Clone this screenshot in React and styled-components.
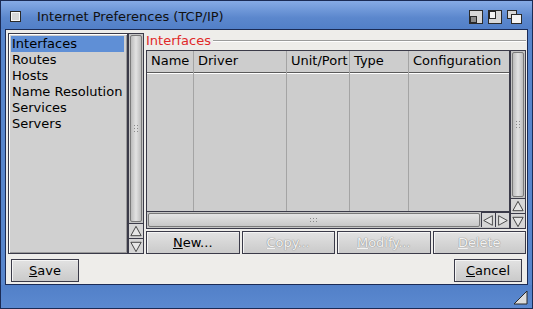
import React from 'react'
import styled, { createGlobalStyle } from 'styled-components'

const GlobalStyle = createGlobalStyle`
  * { box-sizing: border-box; }
  html, body { margin: 0; padding: 0; background: #5886cc; }
  body { font-family: "DejaVu Sans", "Liberation Sans", sans-serif; font-size: 13px; }
`

const items = ['Interfaces', 'Routes', 'Hosts', 'Name Resolution', 'Services', 'Servers']

const columns = [
    { label: 'Name', width: 47 },
    { label: 'Driver', width: 93 },
    { label: 'Unit/Port', width: 63 },
    { label: 'Type', width: 59 },
    { label: 'Configuration', width: 0 },
]

function Arrow({ dir }) {
    const pts = {
        up: '2,12 7.5,2 13,12',
        down: '2,3 7.5,13 13,3',
        left: '12,2 2,7.5 12,13',
        right: '3,2 13,7.5 3,13',
    }
    return (
        <svg width="15" height="15" viewBox="0 0 15 15">
            <polygon points={pts[dir]} fill="#e6e6e6" stroke="#3a3a3a" strokeWidth="1" />
        </svg>
    )
}

function Grip({ horizontal }) {
    const dots = []
    for (let i = 0; i < 3; i++) {
        for (let j = 0; j < 2; j++) {
            dots.push(horizontal
                ? <rect key={i + '-' + j} x={i * 3} y={j * 3} width="1" height="1" fill="#8a8a8a" />
                : <rect key={i + '-' + j} x={j * 3} y={i * 3} width="1" height="1" fill="#8a8a8a" />)
        }
    }
    return horizontal
        ? <svg width="8" height="5">{dots}</svg>
        : <svg width="5" height="8">{dots}</svg>
}

function Under({ text }) {
    return (
        <>
            <u>{text[0]}</u>{text.slice(1)}
        </>
    )
}

function App() {
    return (
        <Window>
            <GlobalStyle />
            <TitleBar>
                <CloseGadget />
                <Title>Internet Preferences (TCP/IP)</Title>
                <Gadgets>
                    <svg width="14" height="14" viewBox="0 0 14 14">
                        <rect x="0.5" y="0.5" width="13" height="13" fill="#d8d8d8" stroke="#2a2a2a" />
                        <rect x="1.5" y="6.5" width="6" height="6" fill="#8c8c8c" stroke="#2a2a2a" />
                    </svg>
                    <svg width="14" height="14" viewBox="0 0 14 14">
                        <rect x="0.5" y="0.5" width="13" height="13" fill="#d8d8d8" stroke="#2a2a2a" />
                        <rect x="1.5" y="1.5" width="6" height="7" fill="#f4f4f4" stroke="#2a2a2a" />
                    </svg>
                    <svg width="15" height="14" viewBox="0 0 15 14">
                        <rect x="0.5" y="0.5" width="9" height="8" fill="#d8d8d8" stroke="#2a2a2a" />
                        <rect x="4.5" y="4.5" width="10" height="9" fill="#f4f4f4" stroke="#2a2a2a" />
                    </svg>
                </Gadgets>
            </TitleBar>
            <Body>
                <Main>
                    <ListGroup>
                        <List>
                            {items.map((it, i) => (
                                <ListItem key={it} $selected={i === 0}>{it}</ListItem>
                            ))}
                        </List>
                        <VScroll>
                            <VKnob><Grip /></VKnob>
                            <ArrowBox><Arrow dir="up" /></ArrowBox>
                            <ArrowBox><Arrow dir="down" /></ArrowBox>
                        </VScroll>
                    </ListGroup>
                    <Panel>
                        <GroupTitle>
                            <GroupLabel>Interfaces</GroupLabel>
                            <GroupLine />
                        </GroupTitle>
                        <TableArea>
                            <TableCol>
                                <Table>
                                    {columns.map(c => (
                                        <Column key={c.label} $width={c.width}>
                                            <HeaderCell>{c.label}</HeaderCell>
                                            <ColumnBody />
                                        </Column>
                                    ))}
                                </Table>
                                <HScroll>
                                    <HKnob><Grip horizontal /></HKnob>
                                    <ArrowBox><Arrow dir="left" /></ArrowBox>
                                    <ArrowBox><Arrow dir="right" /></ArrowBox>
                                </HScroll>
                            </TableCol>
                            <VScroll>
                                <VKnob><Grip /></VKnob>
                                <ArrowBox><Arrow dir="up" /></ArrowBox>
                                <ArrowBox><Arrow dir="down" /></ArrowBox>
                            </VScroll>
                        </TableArea>
                        <ButtonRow>
                            <Button><Under text="New..." /></Button>
                            <Button $disabled><Under text="Copy..." /></Button>
                            <Button $disabled><Under text="Modify..." /></Button>
                            <Button $disabled><Under text="Delete" /></Button>
                        </ButtonRow>
                    </Panel>
                </Main>
                <Footer>
                    <FooterButton><Under text="Save" /></FooterButton>
                    <FooterButton><Under text="Cancel" /></FooterButton>
                </Footer>
            </Body>
            <BottomBar>
                <svg width="15" height="15" viewBox="0 0 15 15">
                    <polygon points="1,14 14,1 14,14" fill="#dcdcdc" stroke="#2a2a2a" />
                </svg>
            </BottomBar>
        </Window>
    )
}

export default App

const Window = styled.div`
    width: 533px;
    height: 309px;
    display: flex;
    flex-direction: column;
    background: #5886cc;
    border: 1px solid #1b2b55;
    overflow: hidden;
`

const TitleBar = styled.div`
    height: 28px;
    flex-shrink: 0;
    display: flex;
    align-items: center;
    padding: 0 8px 0 9px;
    background: linear-gradient(#86abe6, #5b87cd 60%, #5280c8);
`

const CloseGadget = styled.div`
    width: 11px;
    height: 11px;
    margin-top: 2px;
    border: 1px solid #2a2a2a;
    background: #d8d8d8;
    box-shadow: inset 0 0 0 1px #f8f8f8;
`

const Title = styled.div`
    margin-left: 16px;
    margin-top: 2px;
    flex: 1;
    color: #111;
    font-size: 13px;
`

const Gadgets = styled.div`
    display: flex;
    gap: 5px;
    margin-top: 4px;
    margin-right: 2px;
`

const Body = styled.div`
    height: 256px;
    flex-shrink: 0;
    margin: 0 4px;
    border: 1px solid #1b2b55;
    background: #eeedea;
    padding: 3px 2px 2px 2px;
    display: flex;
    flex-direction: column;
`

const Main = styled.div`
    height: 221px;
    display: flex;
    gap: 2px;
`

const ListGroup = styled.div`
    display: flex;
    width: 136px;
`

const List = styled.div`
    width: 120px;
    border: 1px solid #3a3a48;
    box-shadow: inset 1px 1px 0 #ffffff, inset -1px -1px 0 #9a9a9a;
    background: #d0d0d0;
    padding: 2px 3px 2px 2px;
`

const ListItem = styled.div`
    height: 16px;
    line-height: 16px;
    padding-left: 1px;
    color: #000;
    background: ${p => (p.$selected ? '#5f8fd6' : 'transparent')};
`

const VScroll = styled.div`
    width: 16px;
    display: flex;
    flex-direction: column;
    border: 1px solid #3a3a48;
    background: #c4c4c4;
`

const VKnob = styled.div`
    flex: 1;
    margin: 1px;
    border: 1px solid #7a7a7a;
    border-radius: 2px;
    background: linear-gradient(90deg, #bcbcbc, #e2e2e2 50%, #bcbcbc);
    display: flex;
    align-items: center;
    justify-content: center;
`

const ArrowBox = styled.div`
    width: 14px;
    height: 15px;
    flex-shrink: 0;
    border-top: 1px solid #3a3a48;
    display: flex;
    align-items: center;
    justify-content: center;
    background: #d6d6d6;
`

const Panel = styled.div`
    width: 380px;
    display: flex;
    flex-direction: column;
`

const GroupTitle = styled.div`
    height: 17px;
    display: flex;
    align-items: center;
    padding-bottom: 2px;
`

const GroupLabel = styled.div`
    color: #e02828;
    line-height: 14px;
    padding-right: 2px;
`

const GroupLine = styled.div`
    flex: 1;
    height: 2px;
    margin-top: 1px;
    border-top: 1px solid #9c9c9c;
    border-bottom: 1px solid #ffffff;
`

const TableArea = styled.div`
    height: 179px;
    display: flex;
`

const TableCol = styled.div`
    width: 364px;
    display: flex;
    flex-direction: column;
`

const Table = styled.div`
    flex: 1;
    display: flex;
    border: 1px solid #3a3a48;
    background: #cdcdcd;
`

const Column = styled.div`
    ${p => (p.$width ? `width: ${p.$width}px;` : 'flex: 1;')}
    display: flex;
    flex-direction: column;
    border-right: 1px solid #a4a4a4;
    &:last-child { border-right: none; }
`

const HeaderCell = styled.div`
    height: 22px;
    line-height: 20px;
    padding-left: 4px;
    color: #000;
    white-space: nowrap;
    overflow: hidden;
    border-bottom: 1px solid #5a5a5a;
    box-shadow: 0 1px 0 #ffffff;
`

const ColumnBody = styled.div`
    flex: 1;
    margin-top: 1px;
`

const HScroll = styled.div`
    height: 17px;
    display: flex;
    border: 1px solid #3a3a48;
    border-top: none;
    background: #c4c4c4;

    & > div + div { border-left: 1px solid #3a3a48; }
`

const HKnob = styled.div`
    flex: 1;
    margin: 1px;
    border: 1px solid #7a7a7a;
    border-radius: 2px;
    background: linear-gradient(#e4e4e4, #c8c8c8);
    display: flex;
    align-items: center;
    justify-content: center;
`

const ButtonRow = styled.div`
    margin-top: 2px;
    height: 23px;
    display: flex;
    gap: 2px;
`

const Button = styled.button`
    flex: 1;
    height: 23px;
    padding: 0;
    font-family: "DejaVu Sans", "Liberation Sans", sans-serif;
    font-size: 13px;
    border: 1px solid #3a3a48;
    box-shadow: inset 1px 1px 0 #f4f4f4;
    background: linear-gradient(#e2e2e2, #cacaca);
    color: ${p => (p.$disabled ? '#f2f2f2' : '#000')};
    text-shadow: ${p => (p.$disabled ? '0 0 1px #8a8a8a, 0 0 1px #8a8a8a' : 'none')};
`

const Footer = styled.div`
    margin-top: 5px;
    display: flex;
    justify-content: space-between;
    padding: 0 3px;
`

const FooterButton = styled(Button)`
    flex: none;
    width: 68px;
`

const BottomBar = styled.div`
    flex: 1;
    display: flex;
    justify-content: flex-end;
    align-items: center;
    padding-right: 4px;
    padding-top: 2px;
    background: linear-gradient(#5280c8, #5b89d0);
`
